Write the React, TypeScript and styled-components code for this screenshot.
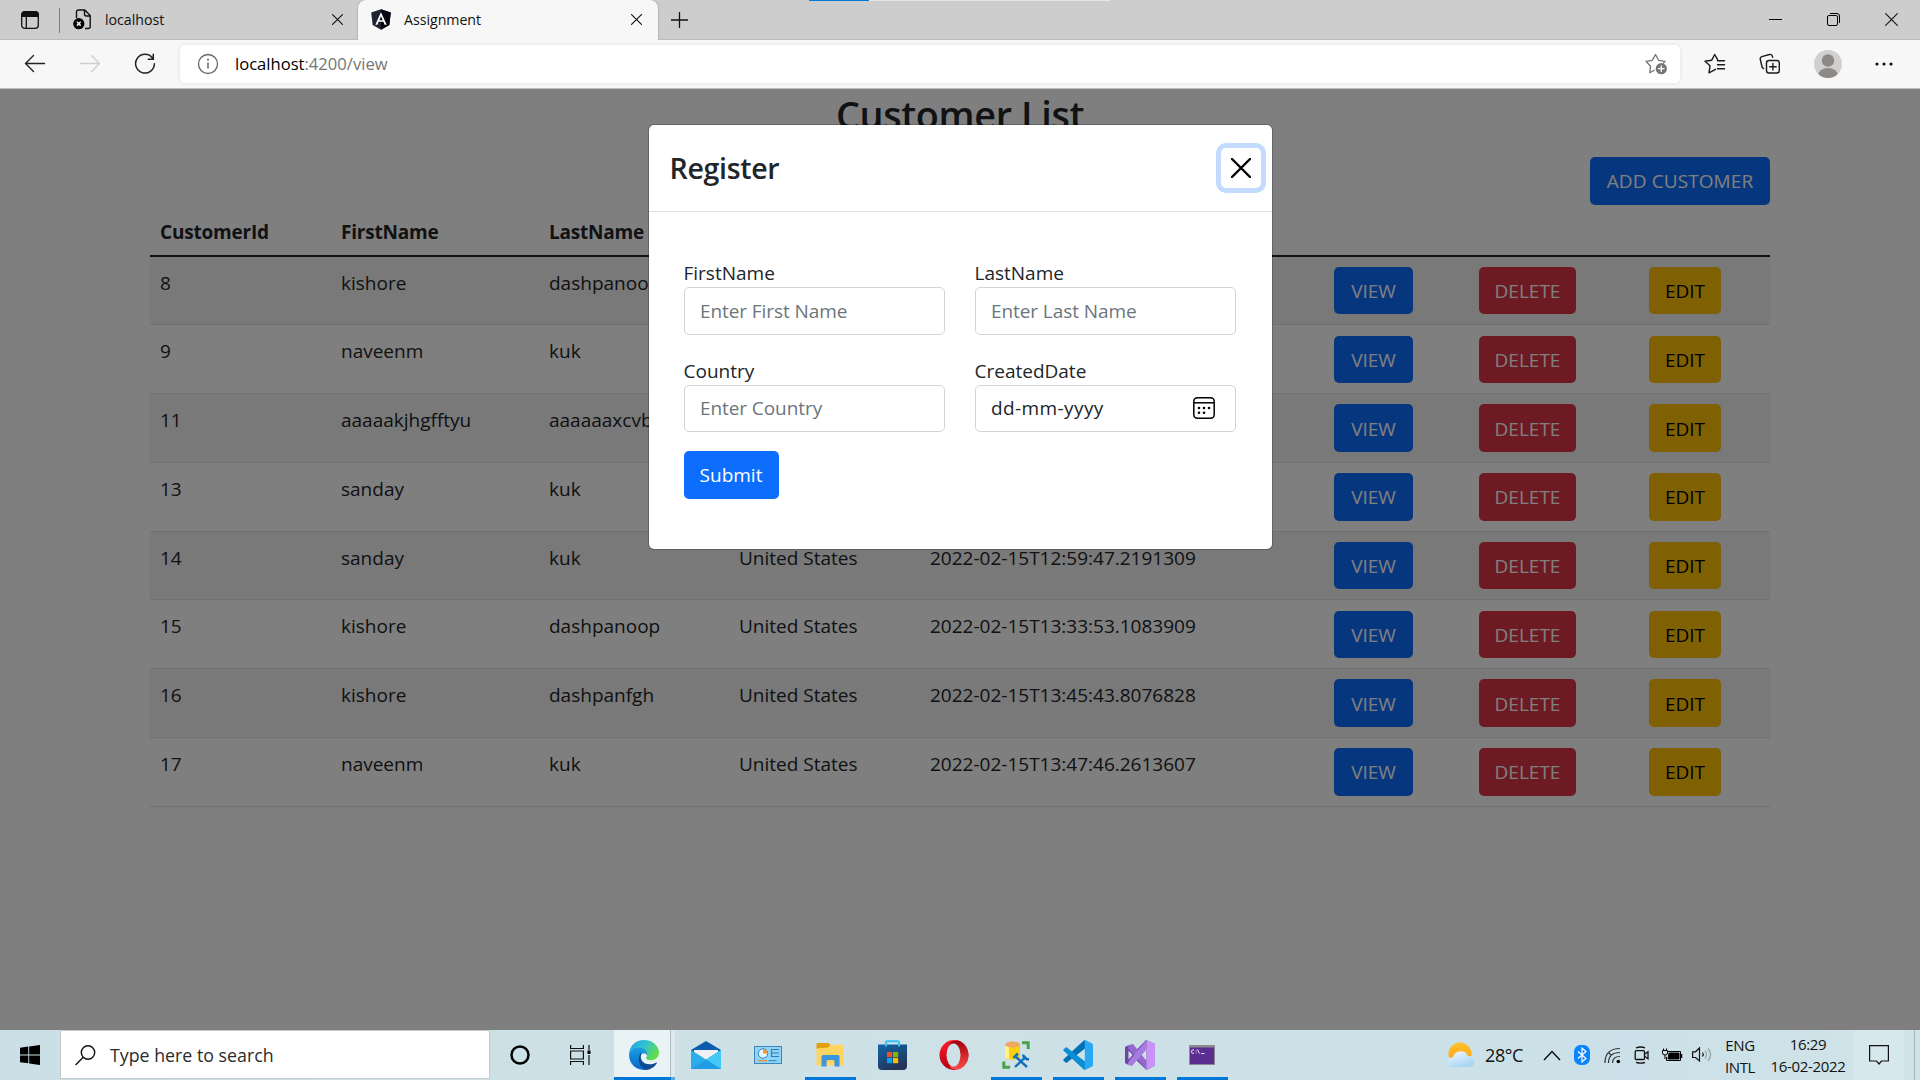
import React from "react";
import styled, { createGlobalStyle, css } from "styled-components";

const GlobalStyle = createGlobalStyle`
  *, *::before, *::after { box-sizing: border-box; }
  body { margin: 0; overflow: hidden; font-family: "Open Sans", "Noto Sans", sans-serif; }
  button, input { font: inherit; letter-spacing: inherit; margin: 0; }
  svg { display: block; flex: none; }
`;

const Screen = styled.div`
  width: 1920px;
  height: 1080px;
  display: flex;
  flex-direction: column;
  overflow: hidden;
`;

/* ---------- browser chrome ---------- */

const TabStrip = styled.div`
  position: relative;
  height: 40px;
  display: flex;
  align-items: stretch;
  background: #cdcdcd;
  border-bottom: 1px solid #bdbdbd;
`;

const LoadBar = styled.div`
  position: absolute;
  top: 0;
  left: 809px;
  width: 301px;
  height: 1px;
  background: linear-gradient(90deg, #0078d7 60px, #e5e5e5 60px);
`;

const TabActions = styled.div`
  width: 60px;
  padding: 11px 0 0 21px;
`;

const StripDivider = styled.div`
  width: 1px;
  height: 25px;
  margin: 8px 0 0 -1px;
  background: #7e7e7e;
`;

const Tab = styled.div<{ $active?: boolean; $width: number; $pad: number }>`
  width: ${(p) => p.$width}px;
  height: 40px;
  padding: 0 ${(p) => (p.$active ? 16 : 15)}px 1px ${(p) => p.$pad}px;
  display: flex;
  align-items: center;
  font-size: 14.2px;
  letter-spacing: -0.03px;
  color: #111;
  ${(p) =>
    p.$active &&
    css`
      position: relative;
      background: #f7f7f7;
      border-radius: 8px 8px 0 0;
      box-shadow: 0 0 2px rgba(0, 0, 0, 0.35);
      clip-path: inset(-3px -3px 0 -3px);
    `}
`;

const TabTitle = styled.span<{ $gap: number }>`
  flex: 1;
  margin-left: ${(p) => p.$gap}px;
`;

const NewTab = styled.div`
  padding: 12px 0 0 13px;
  flex: 1;
`;

const WindowButtons = styled.div`
  display: flex;
  gap: 45px;
  padding: 13px 22px 0 0;
`;

const Toolbar = styled.div`
  height: 49px;
  display: flex;
  align-items: center;
  padding: 0 0 1px 24px;
  background: #f7f7f7;
  border-bottom: 1px solid #bdbdbd;
`;

const NavButtons = styled.div`
  flex: none;
  width: 156px;
  display: flex;
  gap: 33px;
`;

const AddressBar = styled.div`
  flex: none;
  width: 1500px;
  height: 38px;
  display: flex;
  align-items: center;
  padding: 0 13px 0 17px;
  background: #fff;
  border-radius: 5px;
  box-shadow: 0 0 4px rgba(0, 0, 0, 0.1);
`;

const Url = styled.div`
  flex: 1;
  margin-left: 16px;
  font-size: 16.6px;
  color: #767676;
  b {
    font-weight: 400;
    color: #000;
  }
`;

const ToolbarActions = styled.div`
  flex: 1;
  min-width: 0;
  display: flex;
  align-items: center;
  padding-left: 24px;
`;

const ActionSlot = styled.span`
  margin: 0 33px;
`;

/* ---------- page ---------- */

const Page = styled.main`
  position: relative;
  height: 941px;
  padding: 0 150px;
  overflow: hidden;
  background: #fff;
  color: #212529;
  font-size: 19px;
  line-height: 30px;
`;

const Title = styled.h2`
  margin: 0;
  height: 58px;
  padding-top: 2px;
  font-size: 37.8px;
  line-height: 48px;
  font-weight: 600;
  text-align: center;
  letter-spacing: -0.35px;
`;

const Actions = styled.div`
  display: flex;
  justify-content: flex-end;
  padding: 10px 0 0;
  letter-spacing: 0.1px;
`;

const tones = {
  primary: "background:#0d6efd;color:#fff;",
  danger: "background:#dc3545;color:#fff;",
  warning: "background:#ffc107;color:#000;",
};

const Button = styled.button<{ $tone: keyof typeof tones; $width: number }>`
  display: block;
  width: ${(p) => p.$width}px;
  height: 47.5px;
  padding: 1px 0 0;
  border: 0;
  border-radius: 5px;
  text-align: center;
  line-height: 30px;
  white-space: nowrap;
  ${(p) => tones[p.$tone]}
`;

const SubmitButton = styled(Button)`
  margin-top: -2px;
`;

const Table = styled.table`
  width: 1620px;
  table-layout: fixed;
  border-collapse: separate;
  border-spacing: 0;
`;

const HeadCell = styled.th`
  height: 52px;
  padding: 12px 10px 8px;
  border-bottom: 2px solid #212529;
  text-align: left;
  font-weight: 700;
  letter-spacing: -0.2px;
`;

const Row = styled.tr`
  height: 68.75px;
  &:nth-child(odd) {
    background: rgba(0, 0, 0, 0.05);
  }
`;

const Cell = styled.td<{ $action?: boolean }>`
  padding: ${(p) => (p.$action ? "10.4px 10px 9.500px" : "11.2px 10px 9px")};
  border-bottom: 1px solid #dee2e6;
  vertical-align: top;
`;

const Backdrop = styled.div`
  position: absolute;
  inset: 0;
  display: flex;
  justify-content: center;
  align-items: flex-start;
  padding-top: 35px;
  background: rgba(0, 0, 0, 0.5);
`;

const Dialog = styled.section`
  width: 625px;
  height: 426px;
  background: #fff;
  background-clip: padding-box;
  border: 1px solid rgba(0, 0, 0, 0.2);
  border-radius: 6px;
`;

const DialogHeader = styled.header`
  height: 87px;
  display: flex;
  justify-content: space-between;
  align-items: center;
  padding: 0 11px 0 21px;
  border-bottom: 1px solid #dee2e6;
`;

const DialogTitle = styled.h4`
  margin: 0;
  font-size: 28.500px;
  line-height: 45px;
  font-weight: 600;
  letter-spacing: -0.3px;
`;

const CloseButton = styled.button`
  width: 40px;
  height: 40px;
  padding: 10px;
  border: 0;
  border-radius: 5px;
  background: #fff;
  box-shadow: 0 0 0 5px #c2dbfe;
`;

const Form = styled.form`
  display: grid;
  grid-template-columns: 261px 261px;
  column-gap: 30px;
  padding: 46px 0 0 35px;
`;

const Field = styled.label`
  height: 97.5px;
  display: block;
`;

const FieldLabel = styled.span`
  display: block;
  height: 29px;
`;

const InputBox = styled.span`
  height: 47.5px;
  display: flex;
  align-items: center;
  justify-content: space-between;
  padding: 0 20px 0 15.5px;
  border: 1px solid #ced4da;
  border-radius: 5px;
`;

const TextInput = styled.input`
  width: 100%;
  padding: 0;
  border: 0;
  outline: 0;
  background: none;
  color: #212529;
  letter-spacing: -0.08px;
  &::placeholder {
    color: #6c757d;
    opacity: 1;
  }
`;

const DateHint = styled.span`
  letter-spacing: 0.4px;
`;

/* ---------- taskbar ---------- */

const Taskbar = styled.footer`
  height: 50px;
  display: flex;
  align-items: stretch;
  background: linear-gradient(90deg, #cbe0e6, #cde1e6 50%, #cbe0e8 85%, #d0e4e8);
`;

const StartButton = styled.div`
  width: 60px;
  padding: 15px 0 0 20px;
`;

const SearchBox = styled.div`
  width: 430px;
  height: 49px;
  display: flex;
  align-items: center;
  gap: 14px;
  padding: 1px 0 0 14px;
  background: #fff;
  border: 1px solid #c5c9ca;
  font-size: 17.8px;
  color: #2b2b2b;
`;

const SystemButtons = styled.div`
  width: 124px;
  display: flex;
  align-items: center;
  padding-left: 20px;
  gap: 40px;
`;

const AppSlot = styled.div<{ $running?: boolean; $focused?: boolean }>`
  width: 62px;
  height: 50px;
  display: flex;
  align-items: center;
  justify-content: center;
  padding-right: 2px;
  ${(p) =>
    p.$running &&
    css`
      background: linear-gradient(#0078d7, #0078d7) 5px 100% / 51px 3px no-repeat;
    `}
  ${(p) =>
    p.$focused &&
    css`
      background: linear-gradient(90deg, #0078d7 57px, #5ba7e4 57px) 0 100% / 61px 3px no-repeat,
        linear-gradient(90deg, #e9f2f5 56px, #a9bdc3 56px, #a9bdc3 57px, #dceaee 57px) 0 0 / 61px 50px no-repeat;
    `}
`;

const Tray = styled.div`
  flex: 1;
  display: flex;
  align-items: center;
  justify-content: flex-end;
  font-size: 15px;
  line-height: 22px;
  color: #111;
  text-align: center;
`;

const Temperature = styled.span`
  width: 62px;
  padding-left: 10px;
  text-align: left;
  font-size: 18px;
  letter-spacing: -0.4px;
`;

const TrayIcons = styled.div`
  width: 187px;
  display: grid;
  grid-template-columns: repeat(6, 30px);
  align-items: center;
  justify-items: center;
`;

const Stack = styled.div<{ $width: number }>`
  width: ${(p) => p.$width}px;
  white-space: pre-line;
  letter-spacing: -0.35px;
  padding-top: 1px;
`;

const ClockStack = styled(Stack)`
  margin-left: 6px;
  padding-top: 0;
`;

const Notifications = styled.div`
  width: 50px;
  height: 50px;
  margin: 0 10px 0 0;
  padding: 15px;
  background: #d6e8ec;
`;

const DesktopEdge = styled.div`
  width: 6px;
  height: 50px;
  border-left: 1px solid #9fb2b8;
`;

/* ---------- icons ---------- */

const Cross = ({ size, stroke, color = "#111" }: { size: number; stroke: number; color?: string }) => (
  <svg width={size} height={size} viewBox="0 0 20 20" fill="none" stroke={color} strokeWidth={(stroke * 20) / size} strokeLinecap="round">
    <path d="M1 1 19 19M19 1 1 19" />
  </svg>
);

const TabMenuIcon = () => (
  <svg width="18" height="18" viewBox="0 0 18 18" fill="none" stroke="#111" strokeWidth="1.3">
    <rect x=".7" y=".7" width="16.6" height="16.6" rx="3" />
    <path d="M1 3.5Q1 1 3.5 1h11Q17 1 17 3.500v1.800H1z" fill="#111" />
    <path d="M5.300 5v12" />
  </svg>
);

const BrokenPageIcon = () => (
  <svg width="19" height="21" viewBox="0 0 19 21" fill="none" stroke="#111" strokeWidth="1.4">
    <path d="M3.500 9V3Q3.500 1 5.500 1h6.300l5.400 5.500V17.500q0 2-2 2H12M11.500 1v4q0 2 2 2h3.500" />
    <circle cx="5.800" cy="14.700" r="5.600" fill="#000" stroke="none" />
    <path d="m3.900 12.800 3.800 3.800m0-3.800-3.800 3.800" stroke="#eee" strokeWidth="1.500" />
  </svg>
);

const AngularIcon = () => (
  <svg width="20" height="21" viewBox="0 0 20 21">
    <path d="M10 .3 19.800 3.500 18.300 16 10 20.700 1.700 16 .2 3.500z" fill="#20242f" />
    <path d="M10 .3 19.800 3.500 18.300 16 10 20.700z" fill="#04070f" />
    <path d="M10 3.200 4.300 15.700h2.100l1.200-2.900h4.800l1.200 2.900h2.100zm0 4 1.700 4H8.300z" fill="#fff" fillRule="evenodd" />
  </svg>
);

const PlusIcon = () => (
  <svg width="17" height="16" viewBox="0 0 17 16" stroke="#111" strokeWidth="1.3">
    <path d="M8.500 0v16M0 8h17" />
  </svg>
);

const MinimizeIcon = () => (
  <svg width="13" height="13" viewBox="0 0 13 13" stroke="#000">
    <path d="M0 6.500h13" />
  </svg>
);

const RestoreIcon = () => (
  <svg width="13" height="13" viewBox="0 0 13 13" fill="none" stroke="#000">
    <rect x=".5" y="2.500" width="10" height="10" rx="1.500" />
    <path d="M3 .5h7q2.500 0 2.500 2.500v7" />
  </svg>
);

const ArrowIcon = ({ forward }: { forward?: boolean }) => (
  <svg width="22" height="22" viewBox="0 0 22 22" fill="none" stroke={forward ? "#cfcfcf" : "#222"} strokeWidth="1.400" strokeLinecap="round" strokeLinejoin="round">
    <path d={forward ? "M1.500 10.500h19M12.500 2.500l8 8-8 8" : "M20.500 10.500h-19M9.500 2.500l-8 8 8 8"} />
  </svg>
);

const RefreshIcon = () => (
  <svg width="22" height="22" viewBox="0 0 22 22" fill="none" stroke="#222" strokeWidth="1.500" strokeLinecap="round">
    <path d="M18.500 5A9.400 9.400 0 1 0 20.400 10.800M19.300 1.300V6.300H14.300" />
  </svg>
);

const InfoIcon = () => (
  <svg width="22" height="22" viewBox="0 0 22 22" fill="none" stroke="#666" strokeWidth="1.300">
    <circle cx="11" cy="11" r="9.500" />
    <path d="M11 9.500v6" strokeWidth="1.500" />
    <circle cx="11" cy="6.800" r="1" fill="#666" stroke="none" />
  </svg>
);

const AddFavoriteIcon = () => (
  <svg width="22" height="22" viewBox="0 0 22 22" fill="none" stroke="#757575" strokeWidth="1.300" strokeLinejoin="round" strokeLinecap="round">
    <path d="M9.300 17.300 4.700 19.800 5.600 13.200 1 8.300l6.300-1L10.500 1.500l3.100 5.800 6.400 1-1.500 1.900" />
    <circle cx="16.300" cy="15.700" r="5.600" fill="#757575" stroke="none" />
    <path d="M16.300 13v5.400M13.600 15.700H19" stroke="#fff" />
  </svg>
);

const FavoritesIcon = () => (
  <svg width="22" height="22" viewBox="0 0 22 22" fill="none" stroke="#1b1b1b" strokeWidth="1.400" strokeLinejoin="round" strokeLinecap="round">
    <path d="M11.500 16.300 5 19.800 6 12.700 1 8.300l6.600-1L10.700 1.500l2.900 5.200M13.500 7.700H20.500M13.500 11.800H20.500M13.500 15.800H20.500" />
  </svg>
);

const CollectionsIcon = () => (
  <svg width="22" height="22" viewBox="0 0 22 22" fill="none" stroke="#1b1b1b" strokeWidth="1.400" strokeLinecap="round">
    <rect x="7.500" y="7.500" width="12.800" height="12.500" rx="2.500" />
    <path d="M13.900 10.500v6.500M10.700 13.700h6.500M4.500 15.500 3.200 14.500 1.300 6.500Q.8 4.500 2.800 3.700L10.500 1.500Q12.500 1 13.300 3L13.600 4.200" />
  </svg>
);

const AvatarIcon = () => (
  <svg width="28" height="28" viewBox="0 0 28 28">
    <defs>
      <clipPath id="avatarClip">
        <circle cx="14" cy="14" r="14" />
      </clipPath>
    </defs>
    <g clipPath="url(#avatarClip)">
      <rect width="28" height="28" fill="#d2d0ce" />
      <circle cx="14" cy="10.500" r="6.200" fill="#8d8986" />
      <ellipse cx="14" cy="26" rx="10" ry="8" fill="#8d8986" />
    </g>
  </svg>
);

const MoreIcon = () => (
  <svg width="18" height="4" viewBox="0 0 18 4" fill="#111">
    <circle cx="2" cy="2" r="1.600" />
    <circle cx="9" cy="2" r="1.600" />
    <circle cx="16" cy="2" r="1.600" />
  </svg>
);

const CalendarIcon = () => (
  <svg width="22" height="22" viewBox="0 0 22 22" fill="none" stroke="#000" strokeWidth="1.500">
    <rect x=".8" y=".8" width="20.400" height="20.400" rx="3.500" />
    <path d="M1 5.800h20" />
    <g fill="#000" stroke="none">
      <circle cx="6" cy="11" r="1.300" />
      <circle cx="11" cy="11" r="1.300" />
      <circle cx="16" cy="11" r="1.300" />
      <circle cx="6" cy="15.700" r="1.300" />
      <circle cx="11" cy="15.700" r="1.300" />
    </g>
  </svg>
);

const WindowsIcon = () => (
  <svg width="20" height="20" viewBox="0 0 20 20" fill="#000">
    <path d="M0 2.800 8.300 1.600V9.500H0zM9.200 1.500 20 0V9.500H9.200zM0 10.400H8.300V18.300L0 17.200zM9.200 10.400H20V20L9.200 18.500z" />
  </svg>
);

const SearchIcon = () => (
  <svg width="21" height="21" viewBox="0 0 21 21" fill="none" stroke="#111" strokeWidth="1.400">
    <circle cx="13" cy="7.500" r="6.700" />
    <path d="M8.200 12.300.6 20" />
  </svg>
);

const CortanaIcon = () => (
  <svg width="20" height="20" viewBox="0 0 20 20" fill="none" stroke="#000" strokeWidth="2.500">
    <circle cx="10" cy="10" r="8.500" />
  </svg>
);

const TaskViewIcon = () => (
  <svg width="21" height="20" viewBox="0 0 21 20" fill="none" stroke="#111" strokeWidth="1.200">
    <path d="M.6 0v3.500H13.400V0M.6 20V16.500H13.400V20M.6 6H13.400V14H.6zM19 0V5M19 10V20" />
    <rect x="17.500" y="5.500" width="3" height="3.500" fill="#000" stroke="none" />
  </svg>
);

const EdgeIcon = () => (
  <svg width="30" height="30" viewBox="0 0 30 30">
    <defs>
      <linearGradient id="edgeTop" x1="0" y1="0" x2="1" y2=".5">
        <stop offset="0" stopColor="#1f9be0" />
        <stop offset=".5" stopColor="#2fc2d6" />
        <stop offset="1" stopColor="#62dc4a" />
      </linearGradient>
      <linearGradient id="edgeLeft" x1="0" y1="0" x2="0" y2="1">
        <stop offset="0" stopColor="#1b9de2" />
        <stop offset="1" stopColor="#0a66c8" />
      </linearGradient>
    </defs>
    <path d="M0 14C1 5 7 0 15 0c9 0 15 6.500 15 12.500 0 5-4 7.800-8.500 7.800-3.500 0-4.800-1.500-4.300-2.600 2-2.600.5-7.700-6.200-8.700C6 8.500 2 10.500 0 14z" fill="url(#edgeTop)" />
    <path d="M0 15C.5 10.500 5 7.800 9.500 7.800c5.500 0 9.300 3.700 8.700 7.700-1.700-3.700-7.200-3-7.700 2.500-.5 5.500 3.500 11 8.500 11.300C9.500 32 0 25 0 15z" fill="url(#edgeLeft)" />
    <path d="M11.500 13.200C8 18 9.500 27 17 29.900c4 0 8.500-2.700 10.700-6.400.4-.8-.4-1.200-1-.8-7 3.500-14.700.8-14.900-5.700 0-1.500.4-2.800 1.200-3.900z" fill="#104a94" />
  </svg>
);

const MailIcon = () => (
  <svg width="30" height="28" viewBox="0 0 30 28">
    <path d="M0 9 15 0 30 9V12H0z" fill="#0b5cad" />
    <path d="M3 9H27V18L15 22 3 18z" fill="#f0f1f3" />
    <path d="M0 9 15 18.500 30 9V28H0z" fill="#2badea" />
    <path d="M15 18.500 30 9V28z" fill="#41c8f5" />
    <path d="M15 18.500 30 28H0z" fill="#1c97df" opacity=".75" />
  </svg>
);

const ControlPanelIcon = () => (
  <svg width="28" height="18" viewBox="0 0 28 18">
    <rect x=".5" y=".5" width="27" height="17" fill="#8fd3f5" stroke="#3a86bd" />
    <circle cx="9" cy="7.500" r="4.700" fill="#e5f5fc" stroke="#2b83c4" />
    <path d="M9 7.500V3a4.500 4.500 0 0 1 4.500 4.500z" fill="#f39a2d" />
    <path d="M17.500 3.500h7.500M17.500 7h7.500M17.500 10.500h7.500M17.500 3v8" stroke="#2581c2" strokeWidth="1.200" />
    <path d="M4 14.700h9" stroke="#ef8c1f" strokeWidth="1.200" />
    <path d="M14.500 14.700h8" stroke="#2581c2" />
  </svg>
);

const ExplorerIcon = () => (
  <svg width="28" height="24" viewBox="0 0 28 24">
    <path d="M.5 1Q.5 0 1.500 0H12.500L14.500 2V6H.5z" fill="#e0a011" />
    <path d="M.5 5.500 12 4.500 15 1.800H27.500V22.500H.5z" fill="#ffd562" />
    <path d="M5.500 23.500V13.500Q5.500 12 7 12H22Q23.500 12 23.500 13.500V23.500H18.500V18.500Q18.500 17 17 17H12Q10.500 17 10.500 18.500V23.500z" fill="#3b96dc" />
  </svg>
);

const StoreIcon = () => (
  <svg width="29" height="30" viewBox="0 0 29 30">
    <defs>
      <linearGradient id="bag" x1="0" y1="0" x2=".5" y2="1">
        <stop offset="0" stopColor="#0f66ad" />
        <stop offset="1" stopColor="#253457" />
      </linearGradient>
    </defs>
    <path d="M0 4.500H29V26Q29 30 25 30H4Q0 30 0 26z" fill="url(#bag)" />
    <path d="M8 6.500V2.500Q8 1.200 9.200 1.200H19.800Q21 1.200 21 2.500V6.500" fill="none" stroke="#35c3f3" strokeWidth="2" />
    <path d="M9 12h5.200v5.200H9z" fill="#f25022" />
    <path d="M15 12h5.200v5.200H15z" fill="#7fba00" />
    <path d="M9 18h5.200v5.200H9z" fill="#00a4ef" />
    <path d="M15 18h5.200v5.200H15z" fill="#ffb900" />
  </svg>
);

const OperaIcon = () => (
  <svg width="30" height="30" viewBox="0 0 30 30">
    <defs>
      <linearGradient id="operaLeft" x1="0" y1="0" x2="0" y2="1">
        <stop offset="0" stopColor="#ff1b2d" />
        <stop offset="1" stopColor="#b30012" />
      </linearGradient>
      <linearGradient id="operaRight" x1="0" y1="0" x2="0" y2="1">
        <stop offset="0" stopColor="#a0000c" />
        <stop offset="1" stopColor="#ff4d4d" />
      </linearGradient>
    </defs>
    <ellipse cx="15" cy="15" rx="14.500" ry="15" fill="url(#operaLeft)" />
    <path d="M11 2.500C14 .5 18 0 20 .8 33 6 32 25 20 29.200c-3 1-6 0-9-1.700z" fill="url(#operaRight)" />
    <ellipse cx="14.500" cy="15" rx="7" ry="11.500" fill="#cde1e6" />
  </svg>
);

const DatabaseToolsIcon = () => (
  <svg width="28" height="28" viewBox="0 0 28 28">
    <path d="M3 3.500H18V17Q10.500 20.500 3 17z" fill="#fcd00d" />
    <path d="M3 3.500H7V18L3 17z" fill="#fff08a" />
    <ellipse cx="10.500" cy="3.500" rx="7.500" ry="3" fill="#eea760" />
    <path d="M20 1.800H26.200V8M1.800 20.500V26.200H8" fill="none" stroke="#4aa147" strokeWidth="3" />
    <path d="M13 26 24 15.500M14 16 25 26" stroke="#1470bd" strokeWidth="2.400" />
    <path d="M11.500 17 16 12.500M21.500 13.500Q21 18 27 18.500" stroke="#1470bd" strokeWidth="2.600" fill="none" />
  </svg>
);

const VSCodeIcon = () => (
  <svg width="30" height="30" viewBox="0 0 30 30">
    <path d="M22 0V8.500L4 22.500Q3 23 2.300 22.300L.4 20.500Q0 19.800.6 19.200L20.500.8Q21.200 0 22 0z" fill="#0071b8" />
    <path d="M22 30V21.500L4 7.500Q3 7 2.300 7.700L.4 9.500Q0 10.200.6 10.800L20.500 29.200Q21.200 30 22 30z" fill="#0b8ed6" />
    <path d="M22 0 28.800 3.200Q30 3.800 30 5V25Q30 26.200 28.800 26.800L22 30Q20.500 30 21.800 28V2Q20.500 0 22 0z" fill="#29a9f2" />
  </svg>
);

const VisualStudioIcon = () => (
  <svg width="30" height="30" viewBox="0 0 30 30">
    <path d="M0 7 3.500 5.200 10.500 11 21 0 30 4V25.500L21.500 30 10.500 19.500 3.500 25 0 23z" fill="#6d45a6" />
    <path d="M3.500 10.500V19.500L7.500 15z" fill="#cde1e6" />
    <path d="M21.500 8.500V21.500L14 15z" fill="#cde1e6" />
    <path d="M3.500 5.200 8 4 24 24 21.500 30 3 8z" fill="#9469cc" />
    <path d="M2.500 24.800 7 26 21.500 9.500V0L4 21z" fill="#a77be0" />
    <path d="M21.500 0 30 4V25.500L21.500 30z" fill="#c893f6" />
  </svg>
);

const TerminalIcon = () => (
  <svg width="26" height="20" viewBox="0 0 26 20">
    <rect width="26" height="20" fill="#8b8b93" />
    <rect x="1" y="2.500" width="24" height="16.500" fill="#5c2d91" />
    <path d="M5 5H3.500Q2.700 5 2.700 6V7.500Q2.700 8.300 3.500 8.300H5M7 5.500v.9M7 7.500v.9M8.500 4.500l2 4M12 8.500h3.500" stroke="#fff" fill="none" strokeWidth=".9" />
  </svg>
);

const WeatherIcon = () => (
  <svg width="28" height="26" viewBox="0 0 28 26">
    <defs>
      <linearGradient id="sun" x1="0" y1="0" x2="0" y2="1">
        <stop offset="0" stopColor="#ffc32b" />
        <stop offset="1" stopColor="#ff9a1c" />
      </linearGradient>
      <linearGradient id="cloud" x1="0" y1="0" x2=".5" y2="1">
        <stop offset="0" stopColor="#f2faff" />
        <stop offset="1" stopColor="#a9d6f5" />
      </linearGradient>
    </defs>
    <circle cx="13" cy="12" r="11.500" fill="url(#sun)" />
    <path d="M6 25Q.5 25 .5 20 .5 15.500 6 15.300 8 8.500 14.500 9.200 19.500 9.500 20.700 14 27.500 13.800 27.500 19.500 27.500 25 21.500 25z" fill="url(#cloud)" />
  </svg>
);

const ChevronIcon = () => (
  <svg width="18" height="11" viewBox="0 0 18 11" fill="none" stroke="#111" strokeWidth="1.500">
    <path d="m1 10 8-8.500L17 10" />
  </svg>
);

const BluetoothIcon = () => (
  <svg width="16" height="20" viewBox="0 0 16 20" fill="none">
    <rect width="16" height="20" rx="6.500" fill="#0a84ff" />
    <path d="m4 6.500 8 7L8 17V3l4 3.500-8 7" stroke="#fff" strokeWidth="1.200" />
  </svg>
);

const WifiIcon = () => (
  <svg width="17" height="17" viewBox="0 0 17 17" fill="none" stroke="#333" strokeWidth="1.200">
    <path d="M1 16Q1 1.500 16 1.500M4.500 16Q4.500 5.500 16 5.500M8.500 16Q8.500 9.500 16 9.500M4.500 5.500 7 8" />
    <circle cx="14.300" cy="14.500" r="1.800" fill="#000" stroke="none" />
  </svg>
);

const MeetNowIcon = () => (
  <svg width="16" height="18" viewBox="0 0 16 18" fill="none" stroke="#111" strokeWidth="1.300">
    <rect x="1.200" y="4.700" width="9.300" height="8.800" rx="1" />
    <path d="m10.500 8.200 3.500-2.500v7l-3.500-2.500M2 1.800Q7 .2 11 1.800M2 16.300Q7 18 11 16.300" />
  </svg>
);

const BatteryIcon = () => (
  <svg width="21" height="14" viewBox="0 0 21 14" fill="none" stroke="#000">
    <path d="M5.500 3.500H18.500V12.500H4.500V9" />
    <path d="M7 5H17V11H6z" fill="#000" />
    <path d="M19.500 6v4" strokeWidth="1.500" />
    <path d="M.5 2.500H5.500V5Q5.500 7 3 7 .5 7 .5 5zM1.500.5v2M4.500.5v2M3 7v4" />
  </svg>
);

const VolumeIcon = () => (
  <svg width="21" height="18" viewBox="0 0 21 18" fill="none" stroke="#111" strokeWidth="1.200">
    <path d="M.6 5.800H3.500L7.500 2V15L3.500 11.500H.6z" />
    <path d="M10.500 6.500Q12 8.500 10.500 10.500" />
    <path d="M13 4.500Q16 8.500 13 12.500M16 2.500Q21 8.500 16 14.800" stroke="#8da0a5" />
  </svg>
);

const ActionCenterIcon = () => (
  <svg width="20" height="20" viewBox="0 0 20 20" fill="none" stroke="#111" strokeWidth="1.200">
    <path d="M.6.6H19.400V16H12.500L10 19 7.500 16H.6z" />
  </svg>
);

/* ---------- data ---------- */

type Customer = { id: number; first: string; last: string; country?: string; created?: string };

const customers: Customer[] = [
  { id: 8, first: "kishore", last: "dashpanoop" },
  { id: 9, first: "naveenm", last: "kuk" },
  { id: 11, first: "aaaaakjhgfftyu", last: "aaaaaaxcvb" },
  { id: 13, first: "sanday", last: "kuk" },
  { id: 14, first: "sanday", last: "kuk", country: "United States", created: "2022-02-15T12:59:47.2191309" },
  { id: 15, first: "kishore", last: "dashpanoop", country: "United States", created: "2022-02-15T13:33:53.1083909" },
  { id: 16, first: "kishore", last: "dashpanfgh", country: "United States", created: "2022-02-15T13:45:43.8076828" },
  { id: 17, first: "naveenm", last: "kuk", country: "United States", created: "2022-02-15T13:47:46.2613607" },
];

const columnWidths = [181, 208, 190, 191, 404, 145, 170, 131];

const apps: { name: string; icon: React.ReactNode; running?: boolean; focused?: boolean }[] = [
  { name: "edge", icon: <EdgeIcon />, focused: true },
  { name: "mail", icon: <MailIcon /> },
  { name: "control", icon: <ControlPanelIcon /> },
  { name: "explorer", icon: <ExplorerIcon />, running: true },
  { name: "store", icon: <StoreIcon /> },
  { name: "opera", icon: <OperaIcon /> },
  { name: "database", icon: <DatabaseToolsIcon />, running: true },
  { name: "vscode", icon: <VSCodeIcon />, running: true },
  { name: "visualstudio", icon: <VisualStudioIcon />, running: true },
  { name: "terminal", icon: <TerminalIcon />, running: true },
];

const BrowserChrome = () => (
  <>
    <TabStrip>
      <TabActions>
        <TabMenuIcon />
      </TabActions>
      <StripDivider />
      <Tab $width={298} $pad={13}>
        <BrokenPageIcon />
        <TabTitle $gap={13}>localhost</TabTitle>
        <Cross size={11} stroke={1.15} />
      </Tab>
      <Tab $active $width={300} $pad={13}>
        <AngularIcon />
        <TabTitle $gap={13}>Assignment</TabTitle>
        <Cross size={11} stroke={1.15} />
      </Tab>
      <NewTab>
        <PlusIcon />
      </NewTab>
      <WindowButtons>
        <MinimizeIcon />
        <RestoreIcon />
        <Cross size={13} stroke={1.1} color="#111" />
      </WindowButtons>
      <LoadBar />
    </TabStrip>
    <Toolbar>
      <NavButtons>
        <ArrowIcon />
        <ArrowIcon forward />
        <RefreshIcon />
      </NavButtons>
      <AddressBar>
        <InfoIcon />
        <Url>
          <b>localhost</b>:4200/view
        </Url>
        <AddFavoriteIcon />
      </AddressBar>
      <ToolbarActions>
        <FavoritesIcon />
        <ActionSlot>
          <CollectionsIcon />
        </ActionSlot>
        <AvatarIcon />
        <ActionSlot>
          <MoreIcon />
        </ActionSlot>
      </ToolbarActions>
    </Toolbar>
  </>
);

const CustomerTable = () => (
  <Table>
    <colgroup>
      {columnWidths.map((w, i) => (
        <col key={i} width={w} />
      ))}
    </colgroup>
    <thead>
      <tr>
        <HeadCell>CustomerId</HeadCell>
        <HeadCell>FirstName</HeadCell>
        <HeadCell>LastName</HeadCell>
        <HeadCell />
        <HeadCell />
        <HeadCell />
        <HeadCell />
        <HeadCell />
      </tr>
    </thead>
    <tbody>
      {customers.map((c) => (
        <Row key={c.id}>
          <Cell>{c.id}</Cell>
          <Cell>{c.first}</Cell>
          <Cell>{c.last}</Cell>
          <Cell>{c.country}</Cell>
          <Cell>{c.created}</Cell>
          <Cell $action>
            <Button $tone="primary" $width={79}>VIEW</Button>
          </Cell>
          <Cell $action>
            <Button $tone="danger" $width={97}>DELETE</Button>
          </Cell>
          <Cell $action>
            <Button $tone="warning" $width={72}>EDIT</Button>
          </Cell>
        </Row>
      ))}
    </tbody>
  </Table>
);

const RegisterDialog = () => (
  <Dialog>
    <DialogHeader>
      <DialogTitle>Register</DialogTitle>
      <CloseButton type="button">
        <Cross size={20} stroke={2.4} color="#000" />
      </CloseButton>
    </DialogHeader>
    <Form>
      <Field>
        <FieldLabel>FirstName</FieldLabel>
        <InputBox>
          <TextInput placeholder="Enter First Name" />
        </InputBox>
      </Field>
      <Field>
        <FieldLabel>LastName</FieldLabel>
        <InputBox>
          <TextInput placeholder="Enter Last Name" />
        </InputBox>
      </Field>
      <Field>
        <FieldLabel>Country</FieldLabel>
        <InputBox>
          <TextInput placeholder="Enter Country" />
        </InputBox>
      </Field>
      <Field>
        <FieldLabel>CreatedDate</FieldLabel>
        <InputBox>
          <DateHint>dd-mm-yyyy</DateHint>
          <CalendarIcon />
        </InputBox>
      </Field>
      <SubmitButton type="button" $tone="primary" $width={95}>
        Submit
      </SubmitButton>
    </Form>
  </Dialog>
);

export default function App() {
  return (
    <Screen>
      <GlobalStyle />
      <BrowserChrome />
      <Page>
        <Title>Customer List</Title>
        <Actions>
          <Button $tone="primary" $width={180}>ADD CUSTOMER</Button>
        </Actions>
        <CustomerTable />
        <Backdrop>
          <RegisterDialog />
        </Backdrop>
      </Page>
      <Taskbar>
        <StartButton>
          <WindowsIcon />
        </StartButton>
        <SearchBox>
          <SearchIcon />
          Type here to search
        </SearchBox>
        <SystemButtons>
          <CortanaIcon />
          <TaskViewIcon />
        </SystemButtons>
        {apps.map((a) => (
          <AppSlot key={a.name} $running={a.running} $focused={a.focused}>
            {a.icon}
          </AppSlot>
        ))}
        <Tray>
          <WeatherIcon />
          <Temperature>28°C</Temperature>
          <TrayIcons>
            <ChevronIcon />
            <BluetoothIcon />
            <WifiIcon />
            <MeetNowIcon />
            <BatteryIcon />
            <VolumeIcon />
          </TrayIcons>
          <Stack $width={32}>{"ENG\nINTL"}</Stack>
          <ClockStack $width={92}>{"16:29\n16-02-2022"}</ClockStack>
          <Notifications>
            <ActionCenterIcon />
          </Notifications>
          <DesktopEdge />
        </Tray>
      </Taskbar>
    </Screen>
  );
}
